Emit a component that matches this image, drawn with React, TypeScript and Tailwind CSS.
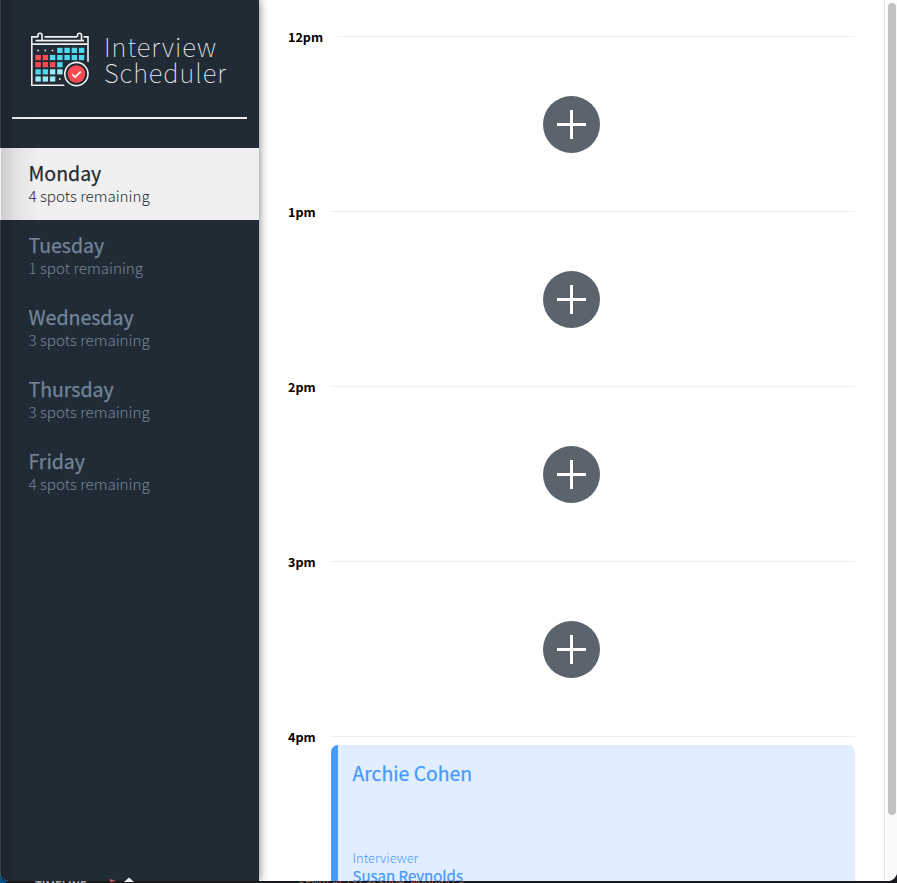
import React from "react";

const days = [
  { name: "Monday", spots: "4 spots remaining", selected: true },
  { name: "Tuesday", spots: "1 spot remaining" },
  { name: "Wednesday", spots: "3 spots remaining" },
  { name: "Thursday", spots: "3 spots remaining" },
  { name: "Friday", spots: "4 spots remaining" },
];

const C = "#4fd8ee";
const R = "#fc4a50";
const L = "#9cebf7";
const cells: [number, number, string][] = [
  [3, 0, C], [4, 0, C], [5, 0, C], [6, 0, C],
  [0, 1, R], [1, 1, R], [2, 1, C], [3, 1, C], [4, 1, C], [5, 1, C], [6, 1, C],
  [0, 2, R], [1, 2, R], [2, 2, R], [3, 2, C],
  [0, 3, C], [1, 3, C], [2, 3, L], [3, 3, L],
  [0, 4, L], [1, 4, L], [2, 4, L],
];

function CalendarLogo() {
  return (
    <svg width="60" height="56" viewBox="30 31 60 56" fill="none" className="shrink-0">
      <g stroke="#f2f2f2" strokeWidth="1.6">
        <path d="M38 36.9H31.8V85.3H64.3M44.5 36.9H77M83.5 36.9H88V61.8M31.8 44.1H88M35.5 40.6H84" />
        <path d="M42 40V35.3a2 2 0 0 0-4 0V36.9M81.5 40V35.3a2 2 0 0 0-4 0V36.9" />
      </g>
      {cells.map(([c, r, color]) => (
        <rect key={`${c}-${r}`} x={35.4 + c * 7.25} y={47.8 + r * 7.15} width="5.4" height="5.2" fill={color} />
      ))}
      <g fill="#f2f2f2">
        <rect x="37.3" y="49.7" width="1.6" height="1.6" />
        <rect x="44.5" y="49.7" width="1.6" height="1.6" />
        <rect x="51.7" y="49.7" width="1.6" height="1.6" />
        <rect x="59" y="78.2" width="1.6" height="1.6" />
      </g>
      <circle cx="76.4" cy="74" r="11.6" fill="#212b36" stroke="#f2f2f2" strokeWidth="1.6" />
      <circle cx="76.4" cy="74" r="8.8" fill="#fc4a50" />
      <path d="M72.3 74.3l2.8 2.8 5.6-5.4" stroke="#fff" strokeWidth="1.7" />
    </svg>
  );
}

function Hour({ label, wide, children }: { label: string; wide?: boolean; children: React.ReactNode }) {
  return (
    <article className="h-[175px]">
      <header className="flex h-[17px] items-center">
        <h4 className={`text-[12.6px] leading-[17px] font-bold text-black ${wide ? "w-[49px]" : "w-[42px]"}`}>{label}</h4>
        <hr className="h-px flex-1 border-0 bg-[#eeeeee]" />
      </header>
      {children}
    </article>
  );
}

function AddButton() {
  return (
    <div className="flex justify-center pt-[51px]">
      <button className="flex size-[57px] items-center justify-center rounded-full bg-[#5b636d]">
        <svg width="29" height="29" viewBox="0 0 29 29" stroke="#fff" strokeWidth="3">
          <path d="M14.5 0V29M0 14.5H29" />
        </svg>
      </button>
    </div>
  );
}

export default function App() {
  return (
    <div className="relative h-[883px] w-[897px] overflow-hidden bg-[#18191c] font-['Noto_Sans_CJK_SC',sans-serif]">
      <main className="flex h-[881px] overflow-hidden rounded-b-[9px] bg-white">
        <aside className="relative z-10 h-full w-[259px] shrink-0 bg-[#212b36] shadow-[1px_0_8px_rgba(0,0,0,0.45)]">
          <div className="flex h-[117px] pt-[31px] pl-[30px]">
            <CalendarLogo />
            <h1 className="mt-[2px] ml-[14px] text-[25.6px] leading-[26px] font-thin tracking-[1px] text-[#efefef]">
              Interview<br />Scheduler
            </h1>
          </div>
          <hr className="mx-3 h-[2px] border-0 bg-[#f0f0f0]" />
          <ul className="mt-[29px]">
            {days.map((d) => (
              <li
                key={d.name}
                className={`h-[72px] pt-[13px] pl-[28.5px] ${d.selected ? "bg-[#f0f0f0] text-[#212b36]" : "text-[#738699]"}`}
              >
                <h2 className="text-[19.5px] leading-[24px] font-normal [-webkit-text-stroke:0.25px_currentColor]">{d.name}</h2>
                <h3 className="text-[15.2px] leading-[21px] font-light">{d.spots}</h3>
              </li>
            ))}
          </ul>
          <div className="pointer-events-none absolute inset-y-0 left-0 w-10 border-l border-white/10 bg-gradient-to-r from-black/15 via-black/5 via-40% to-transparent" />
        </aside>
        <section className="h-full w-[625px] overflow-hidden pt-[28px] pr-[29px] pl-[29px]">
          <Hour label="12pm" wide><AddButton /></Hour>
          <Hour label="1pm"><AddButton /></Hour>
          <Hour label="2pm"><AddButton /></Hour>
          <Hour label="3pm"><AddButton /></Hour>
          <Hour label="4pm">
            <div className="ml-[43px] h-[170px] rounded-[7px] border-l-[7px] border-[#4699ff] bg-[#e1eeff] pt-[14px] pl-[14.5px] text-[#4699ff]">
              <h2 className="text-[19.4px] leading-[28px] font-normal [-webkit-text-stroke:0.25px_currentColor]">Archie Cohen</h2>
              <h4 className="mt-[62px] text-[12.9px] leading-[17px] font-light">Interviewer</h4>
              <h3 className="text-[15px] leading-[19px] font-normal [-webkit-text-stroke:0.25px_currentColor]">Susan Reynolds</h3>
            </div>
          </Hour>
        </section>
        <div className="flex flex-1 justify-center border-l border-[#e4e4e4] bg-[#fafafa] pt-[3px]">
          <div className="ml-[2px] h-[812px] w-2 rounded-full bg-[#c1c1c1]" />
        </div>
      </main>
      <div className="h-[2px] overflow-hidden">
        <div className="flex text-[11px] leading-[12px] text-[#a6a6a8]">
          <span className="-mt-[2px] ml-[35px] font-bold">TIMELINE</span>
          <span className="-mt-[5px] ml-[212px] font-['Liberation_Mono',monospace] text-[#9a6350]">&lt;EmptyList&gt;&lt;show monday/&gt;</span>
        </div>
      </div>
      <svg className="absolute bottom-0 left-0 z-20" width="240" height="10" viewBox="0 0 240 10">
        <path d="M0 0Q1 7 6 8V10H0z" fill="#06508a" />
        <path d="M110 6l6 2.2-6 .8z" fill="#e05a50" />
        <path d="M124 9l5-4.5 5 4.5z" fill="#f0f0f0" />
      </svg>
    </div>
  );
}
